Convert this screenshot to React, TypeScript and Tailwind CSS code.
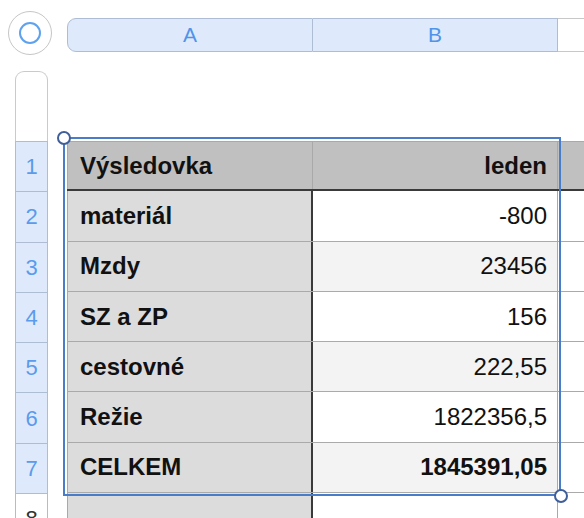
import React from "react";

const rows = [
  { a: "materiál", b: "-800" },
  { a: "Mzdy", b: "23456" },
  { a: "SZ a ZP", b: "156" },
  { a: "cestovné", b: "222,55" },
  { a: "Režie", b: "1822356,5" },
  { a: "CELKEM", b: "1845391,05", bold: true },
];

export default function App() {
  return (
    <div
      className="relative w-[584px] h-[518px] overflow-hidden bg-white"
      style={{ fontFamily: '"Liberation Sans", Arial, sans-serif' }}
    >
      {/* top bar */}
      <div className="flex items-start pt-[11px] pl-[8px]">
        <div className="w-[44px] h-[44px] rounded-full border-[1.5px] border-[#c6c6c6] bg-white flex items-center justify-center shrink-0">
          <div className="w-[22px] h-[22px] rounded-full border-[2.5px] border-[#5ea2ef]" />
        </div>
        <div className="ml-[15px] mt-[7px] flex h-[34px] flex-1">
          <div className="w-[246px] h-full bg-[#deeafb] border border-[#afbdd4] rounded-l-[9px] flex items-center justify-center text-[21px] text-[#4f94ea]">
            A
          </div>
          <div className="w-[245px] h-full bg-[#deeafb] border border-l-0 border-[#afbdd4] flex items-center justify-center text-[21px] text-[#4f94ea]">
            B
          </div>
          <div className="flex-1 h-full border-y border-[#c8c8c8] bg-white" />
        </div>
      </div>

      {/* body */}
      <div className="flex mt-[16px]">
        {/* row headers */}
        <div className="ml-[15px] w-[33px] flex flex-col shrink-0">
          <div className="h-[70px] border border-b-0 border-[#cacaca] rounded-t-[9px] bg-white" />
          {[1, 2, 3, 4, 5, 6, 7].map((n) => (
            <div
              key={n}
              className="h-[50.3px] bg-[#deeafb] border-x border-t border-[#afbdd4] flex items-center justify-center text-[22px] text-[#5a9bec]"
            >
              {n}
            </div>
          ))}
          <div className="h-[40px] border-x border-t border-[#afbdd4] bg-white flex justify-center pt-[14px] text-[22px] leading-none text-[#333]">
            8
          </div>
        </div>

        {/* table */}
        <div className="ml-[19px] mt-[70px] flex-1 flex flex-col text-[24px] text-[#111]">
          {/* header row */}
          <div className="flex h-[50.3px] border-t border-[#a9a9a9] border-b-2 border-b-[#3a3a3a] bg-[#bfc0bf]">
            <div className="w-[246px] border-l border-r border-[#a9a9a9] flex items-center pl-[12px] font-bold">
              Výsledovka
            </div>
            <div className="w-[245px] border-r border-[#a9a9a9] flex items-center justify-end pr-[10px] font-bold">
              leden
            </div>
            <div className="flex-1" />
          </div>
          {rows.map((r, i) => (
            <div key={i} className="flex h-[50.3px] border-b border-[#aaaaaa]">
              <div className="w-[246px] bg-[#dcdcdc] border-l border-[#a9a9a9] border-r-2 border-r-[#3a3a3a] flex items-center pl-[12px] font-bold">
                {r.a}
              </div>
              <div
                className={`w-[245px] border-r border-[#a9a9a9] flex items-center justify-end pr-[10px] ${
                  i % 2 === 1 ? "bg-[#f3f3f3]" : "bg-white"
                } ${r.bold ? "font-bold" : ""}`}
              >
                {r.b}
              </div>
              <div className="flex-1 bg-white" />
            </div>
          ))}
          <div className="flex h-[40px]">
            <div className="w-[246px] bg-[#dcdcdc] border-l border-[#a9a9a9] border-r-2 border-r-[#3a3a3a]" />
            <div className="w-[245px] border-r border-[#a9a9a9] bg-white" />
            <div className="flex-1 bg-white" />
          </div>
        </div>
      </div>

      {/* selection overlay */}
      <div className="absolute left-[63px] top-[137px] w-[498px] h-[359px] border-2 border-[#4a7dc9] pointer-events-none" />
      <div className="absolute left-[57px] top-[131px] w-[14px] h-[14px] rounded-full bg-white border-2 border-[#3e5f99]" />
      <div className="absolute left-[554px] top-[489px] w-[14px] h-[14px] rounded-full bg-white border-2 border-[#3e5f99]" />
    </div>
  );
}
